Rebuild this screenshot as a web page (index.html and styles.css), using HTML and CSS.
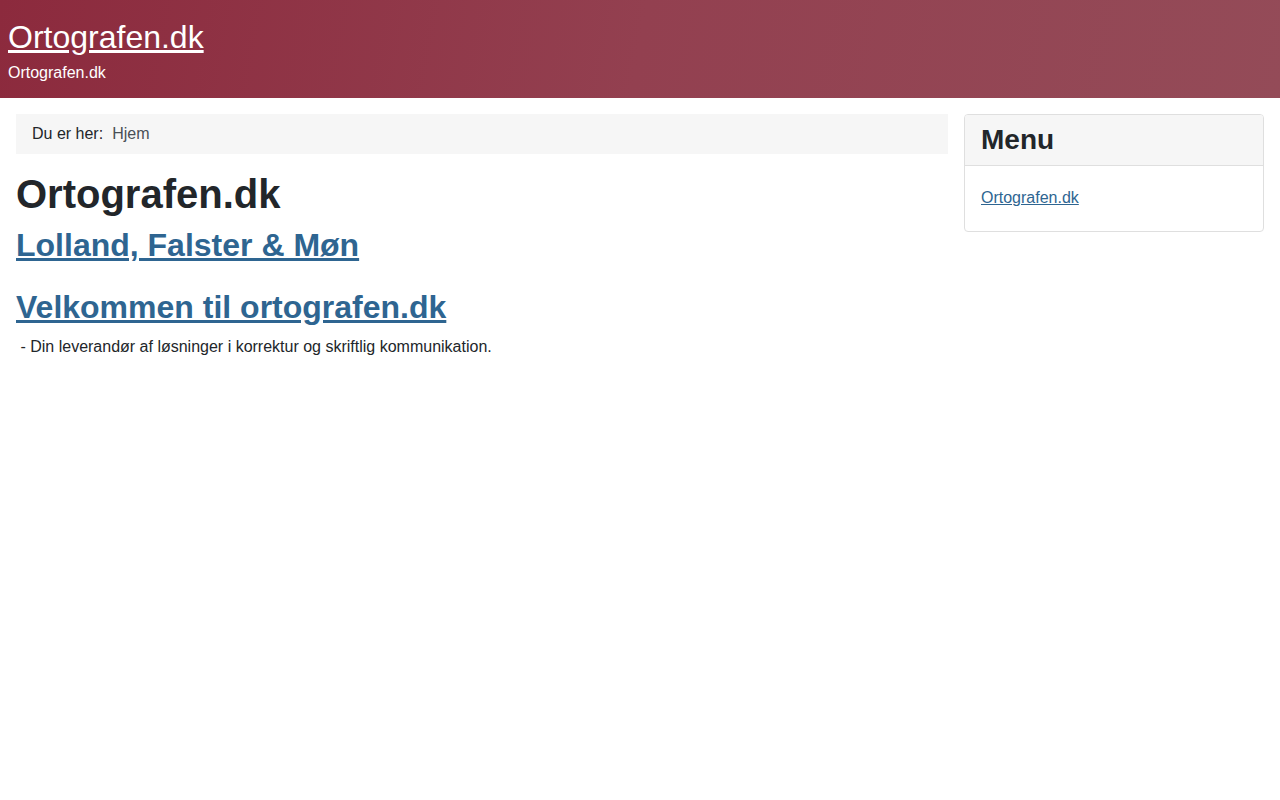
FILE: index.html
```html
<!DOCTYPE html>
<html lang="da">
<head>
<meta charset="utf-8">
<title>Ortografen.dk</title>
<link rel="stylesheet" href="styles.css">
</head>
<body>
<header class="site-header">
  <a class="brand" href="#">Ortografen.dk</a>
  <div class="tagline">Ortografen.dk</div>
</header>
<div class="container">
  <main class="main">
    <nav class="breadcrumb">
      <span class="bc-label">Du er her:</span>
      <span class="bc-item">Hjem</span>
    </nav>
    <h1 class="page-title">Ortografen.dk</h1>
    <h2 class="item-title"><a href="#">Lolland, Falster &amp; Møn</a></h2>
    <h2 class="item-title second"><a href="#">Velkommen til ortografen.dk</a></h2>
    <p class="intro">&nbsp;- Din leverandør af løsninger i korrektur og skriftlig kommunikation.</p>
  </main>
  <aside class="sidebar">
    <div class="card">
      <h3 class="card-header">Menu</h3>
      <div class="card-body">
        <a href="#">Ortografen.dk</a>
      </div>
    </div>
  </aside>
</div>
</body>
</html>
```
FILE: styles.css
```css
* { box-sizing: border-box; }
html, body {
  margin: 0;
  padding: 0;
}
body {
  font-family: "Liberation Sans", Arial, sans-serif;
  font-size: 16px;
  line-height: 1.5;
  color: #22262a;
  background: #fff;
}
a { color: #2e6591; }

.site-header {
  height: 98px;
  padding: 18px 8px 0;
  background: linear-gradient(100deg, #8c2a3d 0%, #934050 50%, #944b58 100%);
  color: #fff;
}
.brand {
  display: inline-block;
  color: #fff;
  font-size: 32px;
  line-height: 38px;
}
.tagline {
  font-size: 16px;
  line-height: 24px;
  margin-top: 5px;
}

.container {
  display: flex;
  gap: 16px;
  padding: 16px;
  align-items: flex-start;
}
.main {
  flex: 1;
  min-width: 0;
}
.sidebar {
  width: 300px;
  flex: none;
}

.breadcrumb {
  background: #f6f6f6;
  height: 40px;
  padding: 8px 16px;
  display: flex;
  gap: 9px;
}
.bc-item { color: #495057; }

.page-title {
  font-size: 40px;
  line-height: 1.2;
  font-weight: 700;
  margin: 16px 0 8px;
}
.item-title {
  font-size: 32px;
  line-height: 1.2;
  font-weight: 700;
  margin: 0 0 8px;
}
.item-title.second { margin-top: 24px; margin-bottom: 8px; }
.intro { margin: 0 0 16px; }

.card {
  border: 1px solid #dfdfdf;
  border-radius: 4px;
  overflow: hidden;
}
.card-header {
  margin: 0;
  background: #f6f6f6;
  border-bottom: 1px solid #dfdfdf;
  padding: 8px 16px;
  font-size: 28px;
  line-height: 1.2;
  font-weight: 700;
}
.card-body {
  padding: 20px 16px 21px;
}
```
